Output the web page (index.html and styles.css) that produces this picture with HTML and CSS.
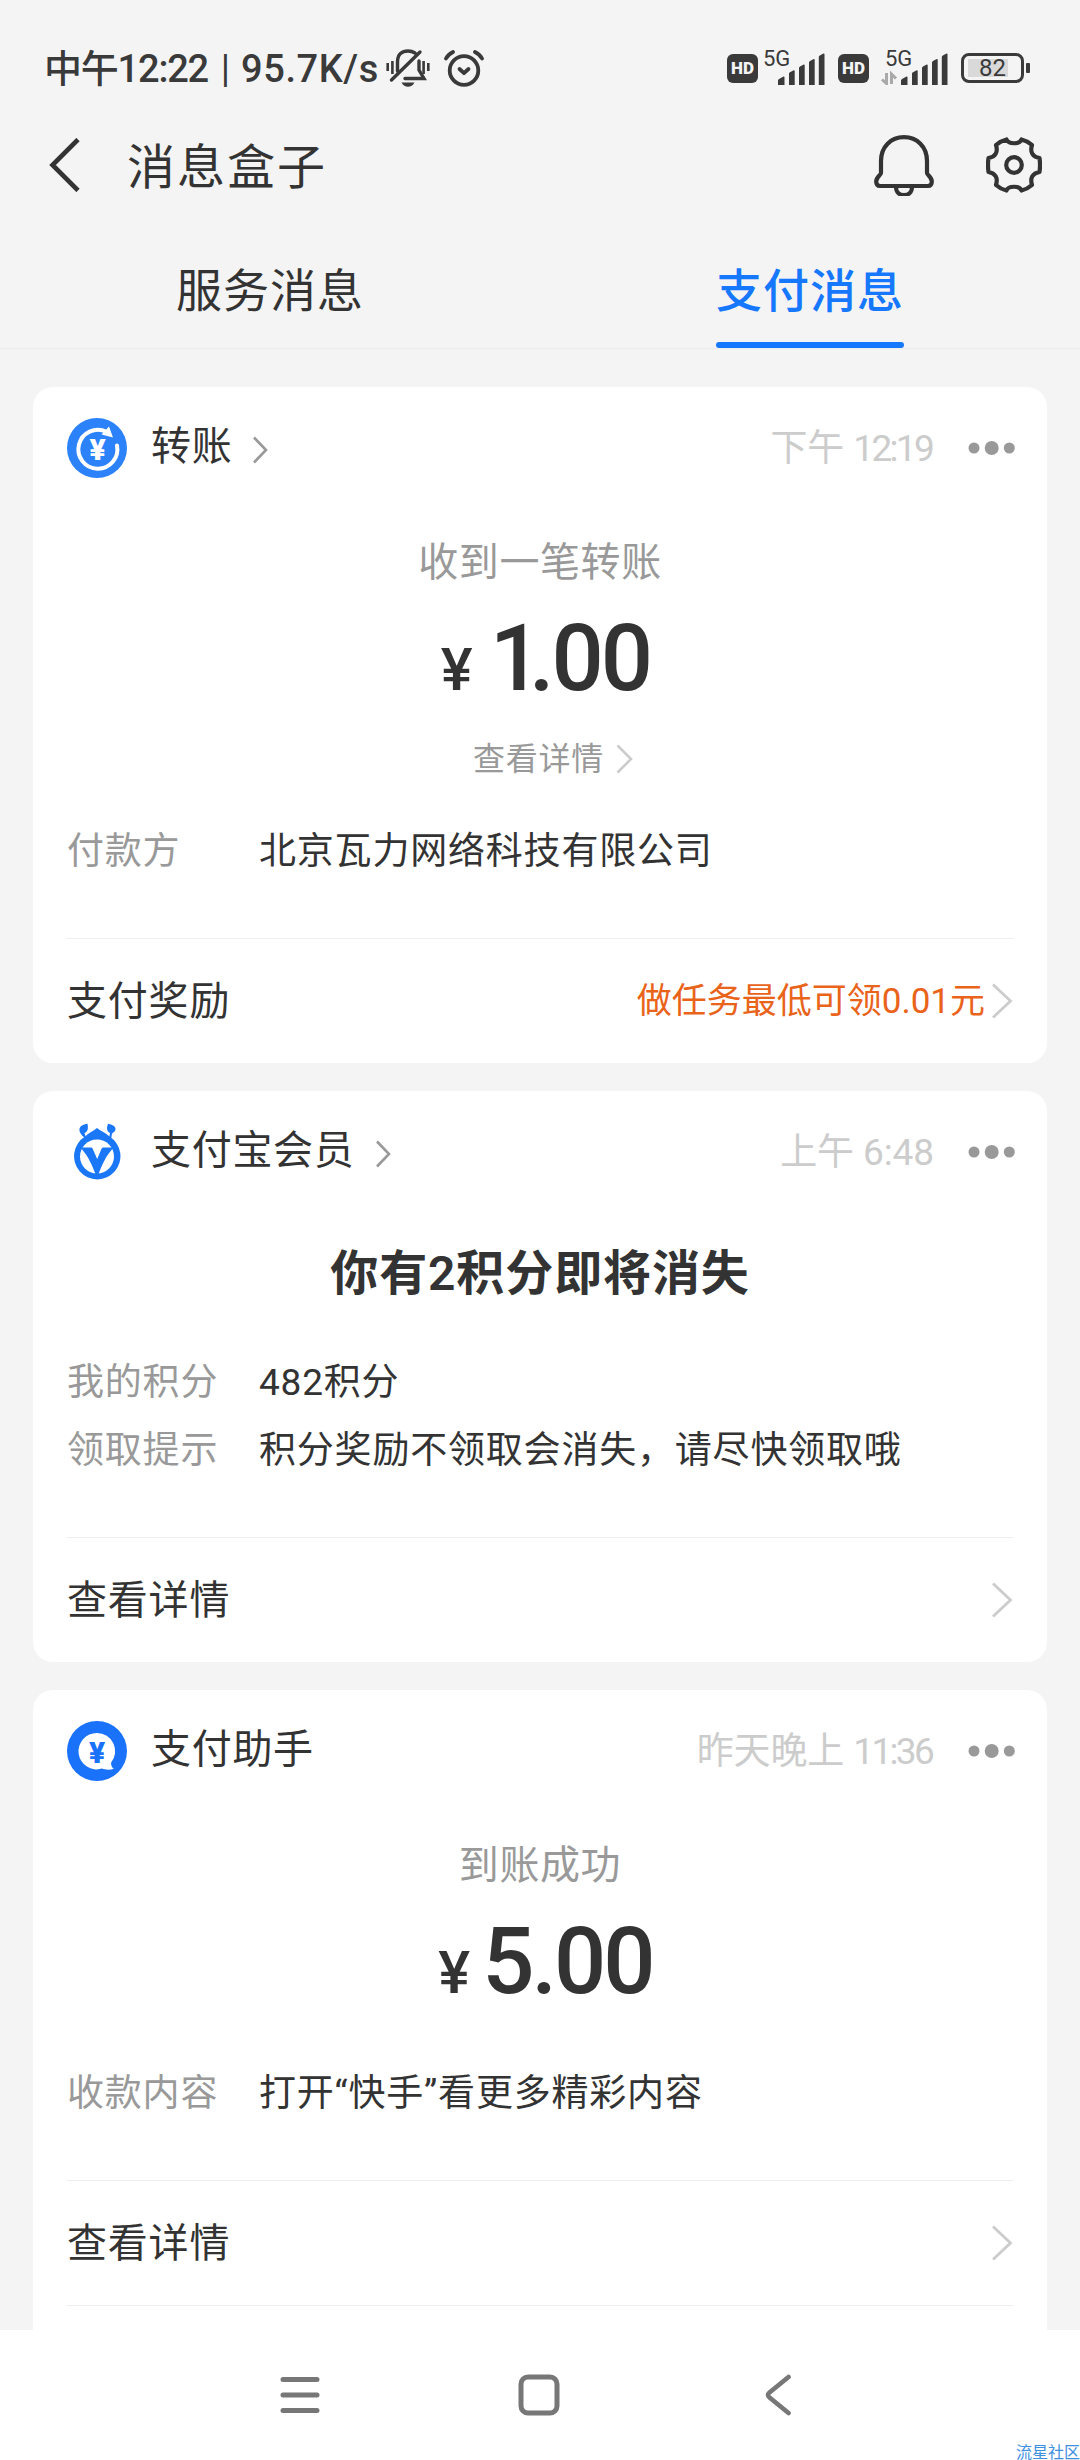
FILE: index.html
```html
<!DOCTYPE html>
<html lang="zh-CN">
<head>
<meta charset="utf-8">
<title>消息盒子</title>
<link rel="stylesheet" href="styles.css">
</head>
<body>
<div class="screen">
  <div class="status">
    <div class="status-left">
      <span class="clock">中午12:22</span><span class="bar">|</span><span class="speed">95.7K/s</span>
      <svg class="mute" width="44" height="38" viewBox="0 0 44 38" fill="none" stroke="#3a3a3a" stroke-width="3.4" stroke-linecap="round">
        <path d="M1.7 14v8M6.4 12v13M42.3 14v8M37.6 12v13" stroke-width="2.6" stroke-linecap="butt"/>
        <path d="M11.5 22V13C11.5 5 16 2 22 2c3 0 5 .7 7 2M33 12v9l5 8.500H19M5.500 31 34 3"/>
        <path d="M15.500 33.500h13c-1.500 3-4 4.300-6.500 4.300s-5-1.300-6.500-4.300z" fill="#3a3a3a" stroke="none"/>
      </svg>
      <svg class="alarm" width="40" height="37" viewBox="0 0 40 37" fill="none" stroke="#3a3a3a" stroke-width="3.800" stroke-linecap="round" stroke-linejoin="round">
        <circle cx="20" cy="20.500" r="14.300"/>
        <path d="M15.500 19l4.500 4.200 4.500-4.200"/>
        <path d="M2 8.500C3.500 5.500 6 3.500 9 2M38 8.500c-1.500-3-4-5-7-6.500"/>
      </svg>
    </div>
    <div class="status-right">
      <span class="hd">HD</span>
      <div class="signal">
        <span class="net">5G</span>
        <svg width="64" height="34" viewBox="0 0 64 34" fill="#3a3a3a">
          <path d="M15 34V29.500q0-1 1-1.500l4.500-2.500q1-.3 1 .7V34zM26 34V22.500q0-1 1-1.300l3.700-2q1-.2 1 .8V34zM36 34V17q0-1 1-1.500l3.700-2q1-.2 1 .8V34zM46 34V11.500q0-1 1-1.500l3.700-2q1-.2 1 .8V34zM55.800 34V6q0-1 1-1.500l3.700-2q1-.2 1 .8V34z"/>
        </svg>
      </div>
      <span class="hd">HD</span>
      <div class="signal second">
        <span class="net">5G</span>
        <svg width="70" height="34" viewBox="-6 0 70 34" fill="#3a3a3a">
          <path d="M15 34V29.500q0-1 1-1.500l4.500-2.500q1-.3 1 .7V34zM26 34V22.500q0-1 1-1.300l3.700-2q1-.2 1 .8V34zM36 34V17q0-1 1-1.500l3.700-2q1-.2 1 .8V34zM46 34V11.500q0-1 1-1.500l3.700-2q1-.2 1 .8V34zM55.800 34V6q0-1 1-1.500l3.700-2q1-.2 1 .8V34z"/>
          <path d="M.5 22v10.500l-4.500-4M5.500 33V23l4.500 4.500" fill="none" stroke="#a9a9a9" stroke-width="3"/>
        </svg>
      </div>
      <div class="battery"><div class="cell"><span class="pct">82</span></div><i class="nub"></i></div>
    </div>
  </div>

  <header class="topbar">
    <svg width="31" height="54" viewBox="0 0 31 54" fill="none" stroke="#333" stroke-width="4.600"><path d="M29 1.500 3.500 27 29 52.500"/></svg>
    <h1>消息盒子</h1>
    <div class="tools">
      <svg width="60" height="62" viewBox="0 0 60 62" fill="none" stroke="#333" stroke-width="4.200" stroke-linejoin="round">
        <path d="M7 27C7 12.500 17 3.200 30 3.200S53 12.500 53 27v12c0 2 4.800 4 4.800 8.500 0 3-1.300 4.500-3.800 4.500H6c-2.500 0-3.800-1.500-3.800-4.500C2.200 43 7 41 7 39z"/>
        <path d="M22 53c0 5.500 4 8.200 8 8.200s8-2.700 8-8.200"/>
      </svg>
      <svg width="56" height="56" viewBox="0 0 56 56" fill="none" stroke="#333" stroke-width="4.200" stroke-linejoin="round">
        <path d="M20.500 2.500c2 5 13 5 15 0q6 1.500 10.500 5.500c-2.200 7 .5 11.800 7.500 13q1 7 0 14c-7 1.200-9.700 6-7.500 13q-4.500 4-10.500 5.500c-2-5-13-5-15 0q-6-1.500-10.500-5.500c2.200-7-.5-11.800-7.500-13q-1-7 0-14c7-1.200 9.700-6 7.500-13q4.500-4 10.500-5.500z"/>
        <circle cx="28" cy="28" r="7.800"/>
      </svg>
    </div>
  </header>

  <nav class="tabs">
    <div class="tab">服务消息</div>
    <div class="tab active">支付消息</div>
  </nav>

  <main class="feed">
    <section class="card">
      <div class="head">
        <svg width="60" height="60" viewBox="0 0 60 60">
          <circle cx="30" cy="30" r="30" fill="#2b82fb"/>
          <path d="M50 27.500A19.500 19.500 0 1 1 39.500 13.800" fill="none" stroke="#fff" stroke-width="4" stroke-linecap="round"/>
          <path d="M42 8.500 46 19.500 34.500 16.500z" fill="#fff"/>
          <text class="yen-mark" x="30.500" y="42" text-anchor="middle" fill="#fff">¥</text>
        </svg>
        <h2>转账</h2>
        <svg class="more-arrow" width="15" height="28" viewBox="0 0 15 28" fill="none" stroke="#999" stroke-width="2.600"><path d="M1 1.500 13 14 1 26.500"/></svg>
        <time>下午 <span class="tight">12:19</span></time>
        <svg class="dots" width="48" height="16" viewBox="0 0 48 16" fill="#999"><circle cx="6" cy="8" r="5.500"/><circle cx="23.700" cy="8" r="7"/><circle cx="41.300" cy="8" r="5.500"/></svg>
      </div>
      <p class="lead">收到一笔转账</p>
      <p class="amount"><span class="yen">¥</span><span class="one">1</span>.00</p>
      <p class="detail">查看详情<svg width="17" height="30" viewBox="0 0 17 30" fill="none" stroke="#ccc" stroke-width="2.600"><path d="M1.500 1.500 15 15 1.500 28.500"/></svg></p>
      <dl class="facts">
        <dt>付款方</dt><dd>北京瓦力网络科技有限公司</dd>
      </dl>
      <div class="action">
        <span>支付奖励</span>
        <span class="reward">做任务最低可领0.01元</span>
        <svg width="22" height="36" viewBox="0 0 22 36" fill="none" stroke="#ccc" stroke-width="2.800"><path d="M2 1.500 19.500 18 2 34.500"/></svg>
      </div>
    </section>

    <section class="card">
      <div class="head">
        <svg width="60" height="60" viewBox="0 0 60 60">
          <path d="M18 16C10 10 10.500 3 20.500 1.800 21.500 7 20.500 10 17.500 11L19.500 17zM42 16l1-5C39.500 9.500 39.500 5.500 41 1.800 50 3 50.500 9 45 11.500L44 18z" fill="#1a77f7"/>
          <path d="M30 6c4 3.500 8.500 4.500 12.500 8.500A23.200 23.200 0 1 1 18 14.500C22 10.500 26 9.500 30 6z" fill="#1a77f7"/>
          <circle cx="30" cy="34.500" r="17" fill="#fff"/>
          <path d="M14 25.500h9.500c1.500 0 2 .5 2.500 2l4.200 9.500 4-9.500c.6-1.500 1.200-2 2.800-2H46.500L44.500 28C39 34 35 43 31.500 52h-3C25 43 21 34 15.500 28z" fill="#1a77f7"/>
        </svg>
        <h2>支付宝会员</h2>
        <svg class="more-arrow" width="15" height="28" viewBox="0 0 15 28" fill="none" stroke="#999" stroke-width="2.600"><path d="M1 1.500 13 14 1 26.500"/></svg>
        <time>上午 6:48</time>
        <svg class="dots" width="48" height="16" viewBox="0 0 48 16" fill="#999"><circle cx="6" cy="8" r="5.500"/><circle cx="23.700" cy="8" r="7"/><circle cx="41.300" cy="8" r="5.500"/></svg>
      </div>
      <h3>你有2积分即将消失</h3>
      <dl class="facts points">
        <dt>我的积分</dt><dd>482积分</dd>
        <dt>领取提示</dt><dd>积分奖励不领取会消失，请尽快领取哦</dd>
      </dl>
      <div class="action">
        <span>查看详情</span>
        <svg width="22" height="36" viewBox="0 0 22 36" fill="none" stroke="#ccc" stroke-width="2.800"><path d="M2 1.500 19.500 18 2 34.500"/></svg>
      </div>
    </section>

    <section class="card">
      <div class="head">
        <svg width="60" height="60" viewBox="0 0 60 60">
          <circle cx="30" cy="30" r="30" fill="#1a72fb"/>
          <path d="M30 12a18.200 18.200 0 1 0 5 35.600c3 1.200 8 1.600 11.800.2-1.800-1.200-2.700-3-2.800-6A18.200 18.200 0 0 0 30 12z" fill="#fff"/>
          <text class="yen-mark" x="30" y="42" text-anchor="middle" fill="#1a72fb">¥</text>
        </svg>
        <h2>支付助手</h2>
        <time>昨天晚上 <span class="tight">11:36</span></time>
        <svg class="dots" width="48" height="16" viewBox="0 0 48 16" fill="#999"><circle cx="6" cy="8" r="5.500"/><circle cx="23.700" cy="8" r="7"/><circle cx="41.300" cy="8" r="5.500"/></svg>
      </div>
      <p class="lead">到账成功</p>
      <p class="amount"><span class="yen">¥</span>5.00</p>
      <dl class="facts receipt">
        <dt>收款内容</dt><dd>打开“快手”看更多精彩内容</dd>
      </dl>
      <div class="action">
        <span>查看详情</span>
        <svg width="22" height="36" viewBox="0 0 22 36" fill="none" stroke="#ccc" stroke-width="2.800"><path d="M2 1.500 19.500 18 2 34.500"/></svg>
      </div>
      <div class="action"></div>
    </section>
  </main>

  <footer class="sysnav">
    <svg width="40" height="42" viewBox="0 0 40 42" stroke="#777" stroke-width="5" stroke-linecap="round"><path d="M3 5.500h34M3 21h34M3 36.500h34"/></svg>
    <svg class="home" width="42" height="42" viewBox="0 0 42 42" fill="none" stroke="#777" stroke-width="5"><rect x="3" y="3" width="36" height="36" rx="7"/></svg>
    <svg width="28" height="42" viewBox="0 0 28 42" fill="none" stroke="#777" stroke-width="4.600" stroke-linecap="round"><path d="M24.500 3 5.500 18.500q-3 2.500 0 5L24.500 39"/></svg>
  </footer>
  <span class="mark">流星社区</span>
</div>
</body>
</html>
```
FILE: styles.css
```css
* { box-sizing: border-box; margin: 0; padding: 0; }

body {
  font-family: Roboto, "Noto Sans CJK SC", sans-serif;
  color: #333;
  background: #f4f4f4;
}

svg { display: block; flex: none; }

.screen {
  position: relative;
  display: flex;
  flex-direction: column;
  width: 1080px;
  height: 2460px;
  overflow: hidden;
}

/* system status bar */
.status {
  display: flex;
  justify-content: space-between;
  height: 110px;
  padding: 26px 50px 0 44px;
  color: #3a3a3a;
}

.status-left,
.status-right { display: flex; align-items: center; height: 84px; }

.status-left { font-size: 38px; line-height: 84px; white-space: pre; }
.status-left span { padding-top: 2px; }
.clock { width: 166px; letter-spacing: -1.2px; font-weight: 500; }
.bar { width: 31px; text-align: center; }
.speed { width: 139px; font-weight: 500; letter-spacing: .6px; }
.mute { margin-left: 6px; }
.alarm { margin-left: 14px; }

.hd {
  width: 31px;
  height: 29px;
  border-radius: 6px;
  background: #3a3a3a;
  color: #f4f4f4;
  font-size: 17px;
  font-weight: 900;
  line-height: 29px;
  text-align: center;
}

.signal { position: relative; width: 64px; margin: 0 11px 0 5px; }
.signal svg { margin-top: 0; }
.signal.second { width: 70px; margin: 0 11px; }
.net { position: absolute; left: 0; top: -4px; font-size: 22px; line-height: 24px; }
.signal.second .net { left: 5px; }

.battery { display: flex; align-items: center; gap: 2px; }
.cell {
  width: 63px;
  height: 30px;
  padding: 3px;
  border: 3px solid #3a3a3a;
  border-radius: 8px;
  background: linear-gradient(#d9d9d9, #d9d9d9) 4px 3px / 40px 18px no-repeat;
}
.pct { display: block; font-size: 24px; line-height: 19px; text-align: center; }
.nub { width: 4px; height: 10px; border-radius: 1px; background: #3a3a3a; }

/* title bar */
.topbar { display: flex; align-items: center; height: 110px; padding: 0 38px 0 49px; }
.topbar h1 {
  margin-left: 47px;
  padding-top: 5px;
  font-size: 48px;
  font-weight: 400;
  line-height: 105px;
  letter-spacing: 2px;
}
.tools { display: flex; align-items: center; gap: 52px; margin-left: auto; }

/* tabs */
.tabs { display: flex; height: 129px; border-bottom: 1px solid #ececec; }
.tab {
  display: flex;
  flex: 1;
  flex-direction: column;
  align-items: center;
  gap: 21px;
  padding-top: 41px;
  font-size: 46px;
  line-height: 60px;
  letter-spacing: 1px;
}
.tab.active { color: #1677ff; font-weight: 500; }
.tab.active::after {
  content: "";
  width: 188px;
  height: 6px;
  border-radius: 3px;
  background: #1677ff;
}

/* message cards */
.feed {
  display: flex;
  flex: 1;
  flex-direction: column;
  gap: 28px;
  min-height: 0;
  padding: 38px 33px 0;
  overflow: hidden;
}
.card { flex: none; padding: 31px 34px 0; border-radius: 20px; background: #fff; }

.head { display: flex; align-items: center; height: 60px; }
.head h2 { margin-left: 24px; font-size: 40px; font-weight: 400; line-height: 56px; letter-spacing: .7px; padding-bottom: 3px; }
.more-arrow { margin: 4px 0 0 21px; }
.head time { margin-left: auto; padding-top: 2px; color: #ccc; font-size: 37px; line-height: 60px; letter-spacing: -.1px; }
.tight { margin-right: 2px; letter-spacing: -2.7px; }
.dots { margin: 0 -3px 0 34px; }

.lead {
  margin-top: 55px;
  color: #999;
  font-size: 40px;
  line-height: 60px;
  letter-spacing: .6px;
  text-align: center;
}
.amount {
  margin-top: 16px;
  padding-left: 11px;
  font-size: 92px;
  font-weight: 500;
  line-height: 100px;
  letter-spacing: -3px;
  text-align: center;
}
.yen { margin-right: 15px; font-size: 60px; line-height: 60px; }
.one { margin-left: 5px; letter-spacing: -13px; }
.detail {
  display: flex;
  align-items: center;
  justify-content: center;
  gap: 12px;
  margin-top: 25px;
  padding-left: 26px;
  color: #999;
  font-size: 32px;
  line-height: 50px;
  letter-spacing: .8px;
}
.card h3 {
  margin-top: 57px;
  font-size: 48px;
  font-weight: 600;
  line-height: 70px;
  letter-spacing: .9px;
  text-align: center;
}

.facts {
  display: grid;
  grid-template-columns: 192px 1fr;
  margin: 34px 0 52px;
  font-size: 37px;
  line-height: 68px;
  letter-spacing: .8px;
}
.facts.points { margin-top: 40px; }
.facts.receipt { margin: 48px 0 52px; }
.facts dt { color: #999; }

.action {
  display: flex;
  align-items: center;
  height: 125px;
  border-top: 1px solid #eee;
  font-size: 40px;
  letter-spacing: .8px;
  line-height: 60px;
}
.action span { padding-top: 2px; }
.action svg { margin-left: auto; }
.action .reward { margin-left: auto; color: #ea631a; font-size: 35px; letter-spacing: 0; }
.action .reward + svg { margin-left: 6px; }

.yen-mark { font: 900 30px Roboto, sans-serif; }

/* system navigation */
.sysnav {
  display: flex;
  flex: none;
  align-items: center;
  justify-content: space-between;
  height: 130px;
  padding: 0 288px 0 280px;
  background: #fff;
}
.home { margin: 0 6px 0 0; }
.mark {
  position: absolute;
  left: 1016px;
  top: 2442px;
  color: #3d8fe0;
  font-family: "Noto Sans CJK SC", sans-serif;
  font-size: 16px;
  line-height: 18px;
  white-space: nowrap;
}
```
